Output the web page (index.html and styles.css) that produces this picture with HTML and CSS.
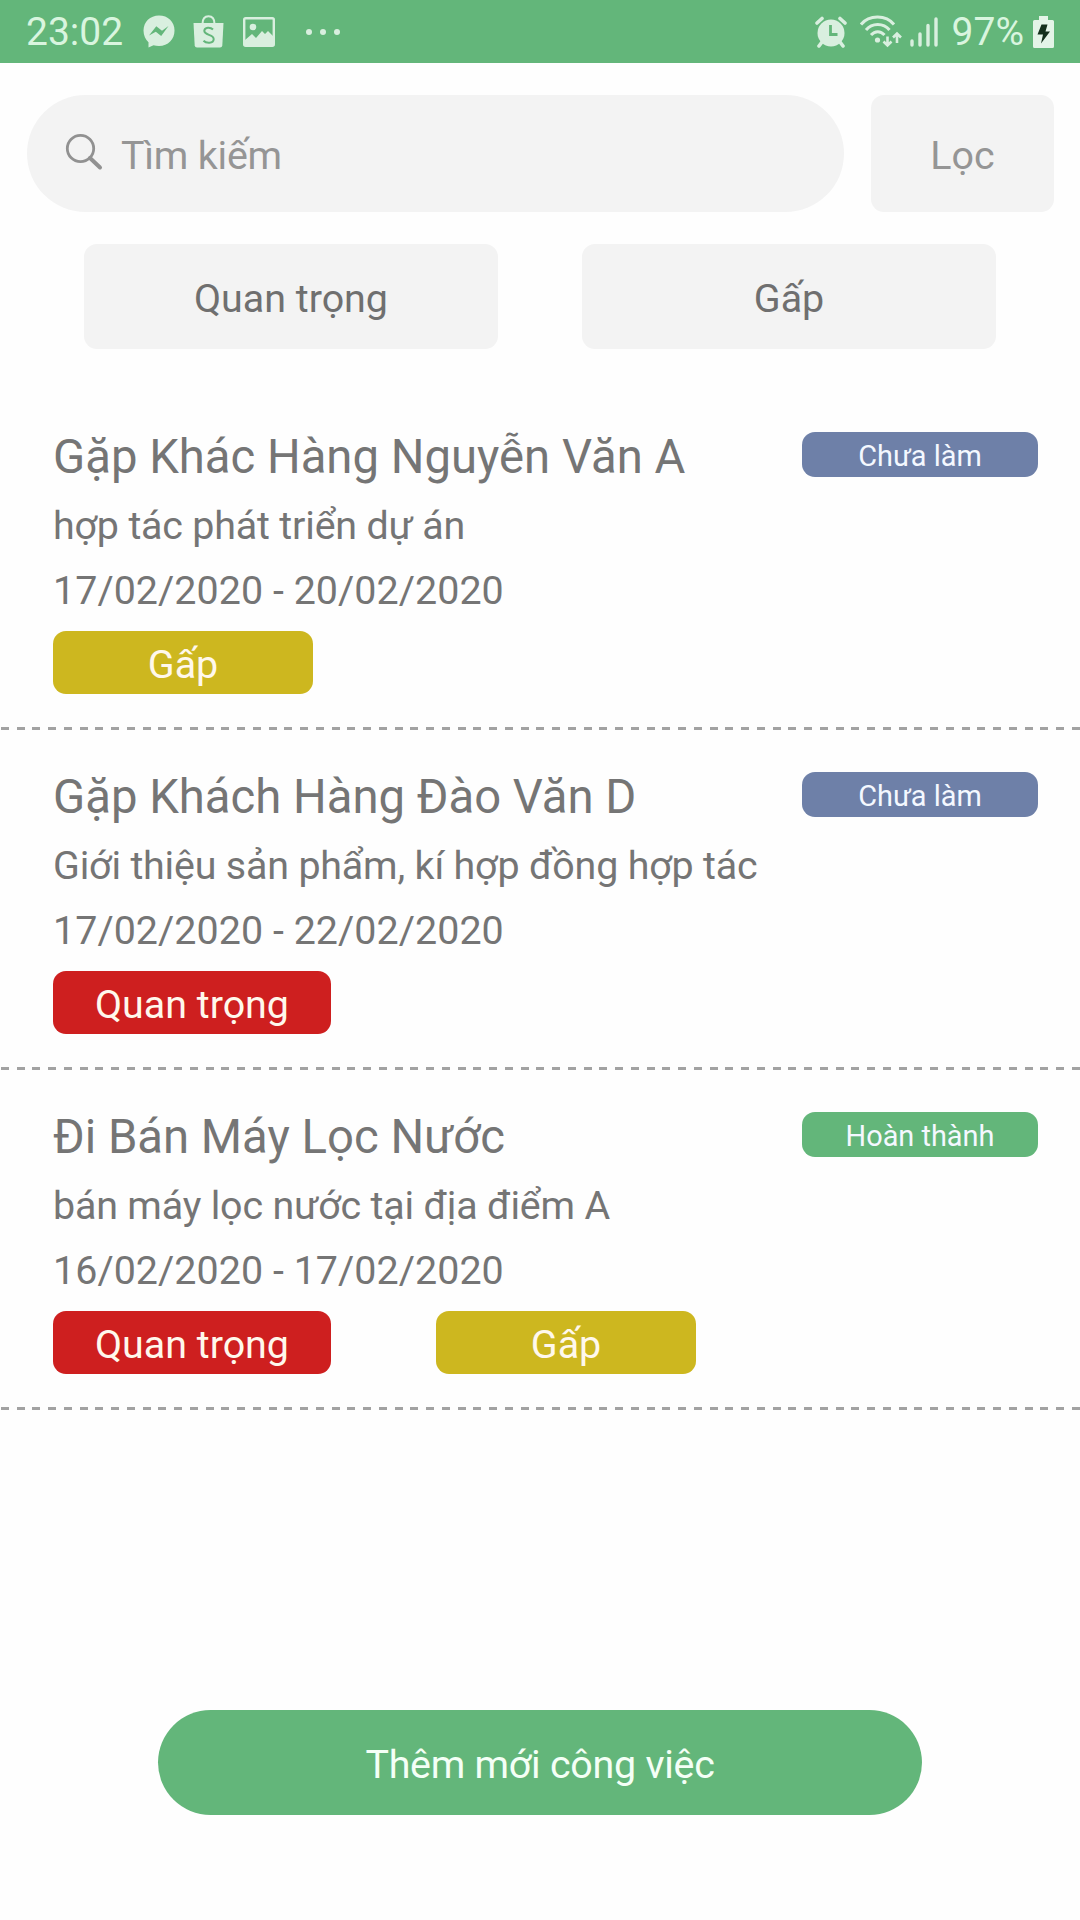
FILE: index.html
```html
<!DOCTYPE html>
<html lang="vi">
<head>
    <meta charset="UTF-8">
    <meta name="viewport" content="width=device-width, initial-scale=1.0">
    <title>Công việc</title>
    <link rel="stylesheet" href="styles.css">
</head>
<body>
    <!-- Status bar -->
    <div class="status-bar">
        <div class="status-left">
            <span class="clock">23:02</span>
            <svg class="icon-messenger" width="32" height="33" viewBox="0 0 32 33">
                <path fill="#d9efdf" d="M16 0.5C7 .5.5 7 .5 15.500c0 5 2 9 5 11.700V32.500l5-2.200c1.700.5 3.500.7 5.500.7 9 0 15.500-6.700 15.500-15.500S25 .5 16 .5z"/>
                <path fill="#63b67a" d="M6 20.500l7.300-9.300 5.700 4.500 6.500-4.700-7.300 10-5.400-4.300z"/>
            </svg>
            <svg class="icon-bag" width="31" height="33" viewBox="0 0 31 33">
                <path d="M9.500 9C9.500 4 12 1.200 15.500 1.200S21.500 4 21.500 9" fill="none" stroke="#d9efdf" stroke-width="2"/>
                <path fill="#d9efdf" d="M.5 8h30l-1.200 22.500q-.2 2-2.300 2H4q-2.100 0-2.300-2z"/>
                <path d="M20 14.500c-2.500-2.600-8.500-2.600-8.700 1.300-.1 4.800 9.700 3.300 9.400 8.400-.3 4.600-7.500 4.400-10.200 1.500" fill="none" stroke="#63b67a" stroke-width="2"/>
            </svg>
            <svg class="icon-image" width="32" height="30" viewBox="0 0 32 30">
                <rect x="1.200" y="1.200" width="29.600" height="27.600" rx="1.500" fill="none" stroke="#d9efdf" stroke-width="2.400"/>
                <circle cx="10" cy="10" r="3.300" fill="#d9efdf"/>
                <path fill="#d9efdf" d="M2 23l7-6 4 4 6-7 3 3 3-3 5 5v10H2z"/>
            </svg>
            <svg class="icon-dots" width="36" height="8" viewBox="0 0 36 8">
                <g fill="#d9efdf"><circle cx="4" cy="4" r="3"/><circle cx="18" cy="4" r="3"/><circle cx="32" cy="4" r="3"/></g>
            </svg>
        </div>
        <div class="status-right">
            <svg class="icon-alarm" width="32" height="32" viewBox="0 0 32 32">
                <circle cx="16" cy="17" r="13.500" fill="#d9efdf"/>
                <path d="M2 7L7 2.500M30 7L25 2.500M7 26l-3 4M25 26l3 4" stroke="#d9efdf" stroke-width="3.600" stroke-linecap="round"/>
                <path d="M15.500 9v9.500H22.500" fill="none" stroke="#63b67a" stroke-width="2.800"/>
            </svg>
            <svg class="icon-wifi" width="42" height="34" viewBox="0 0 42 34">
                <g fill="none" stroke="#d9efdf" stroke-width="3">
                    <path d="M1 9.500C9-.500 26-.500 34 9.500"/>
                    <path d="M6 15c6-7.500 17.500-7.500 23.500 0"/>
                    <path d="M11 20c4-4.500 9.500-4.500 13.500 0"/>
                    <path stroke-width="2.600" d="M27.500 21.500v9M23.500 26.500l4 4 4-4M37 28V19M33 22.500l4-4 4 4"/>
                </g>
                <circle cx="17.500" cy="25" r="2.600" fill="#d9efdf"/>
            </svg>
            <svg class="icon-signal" width="28" height="30" viewBox="0 0 28 30">
                <path d="M2 28v-4M10 28V17M18 28V8.500M26 28V2" stroke="#d9efdf" stroke-width="3.400" stroke-linecap="round"/>
            </svg>
            <span class="battery-text">97%</span>
            <svg class="icon-battery" width="21" height="32" viewBox="0 0 21 32">
                <path fill="#e4f4e8" d="M6 0h9v4h4.500q1.500 0 1.500 1.500v25q0 1.500-1.500 1.500h-18Q0 32 0 30.500v-25Q0 4 1.500 4H6z"/>
                <path fill="#14301c" d="M8.500 8.500h6l-2 7h4.500L8 27.500l2-9H4.500z"/>
            </svg>
        </div>
    </div>

    <!-- Search -->
    <div class="search-row">
        <div class="search-box">
            <svg width="38" height="38" viewBox="0 0 38 38">
                <circle cx="15.500" cy="15.500" r="13.200" fill="none" stroke="#919191" stroke-width="2.800"/>
                <path d="M25 25l10 9.500" stroke="#919191" stroke-width="4" stroke-linecap="round"/>
            </svg>
            <span>Tìm kiếm</span>
        </div>
        <div class="btn-filter">Lọc</div>
    </div>
    <div class="filter-row">
        <div class="filter">Quan trọng</div>
        <div class="filter">Gấp</div>
    </div>

    <!-- Task list -->
    <div class="task-list">
        <div class="task">
            <div class="task-head">
                <div class="task-title">Gặp Khác Hàng Nguyễn Văn A</div>
                <div class="status status-todo">Chưa làm</div>
            </div>
            <div class="task-desc">hợp tác phát triển dự án</div>
            <div class="task-date">17/02/2020 - 20/02/2020</div>
            <div class="tags">
                <div class="tag tag-urgent">Gấp</div>
            </div>
        </div>
        <div class="task">
            <div class="task-head">
                <div class="task-title">Gặp Khách Hàng Đào Văn D</div>
                <div class="status status-todo">Chưa làm</div>
            </div>
            <div class="task-desc">Giới thiệu sản phẩm, kí hợp đồng hợp tác</div>
            <div class="task-date">17/02/2020 - 22/02/2020</div>
            <div class="tags">
                <div class="tag tag-important">Quan trọng</div>
            </div>
        </div>
        <div class="task">
            <div class="task-head">
                <div class="task-title">Đi Bán Máy Lọc Nước</div>
                <div class="status status-done">Hoàn thành</div>
            </div>
            <div class="task-desc">bán máy lọc nước tại địa điểm A</div>
            <div class="task-date">16/02/2020 - 17/02/2020</div>
            <div class="tags">
                <div class="tag tag-important">Quan trọng</div>
                <div class="tag tag-urgent">Gấp</div>
            </div>
        </div>
    </div>

    <div class="btn-add">Thêm mới công việc</div>
</body>
</html>
```
FILE: styles.css
```css
* {
    box-sizing: border-box;
}
body {
    display: flex;
    flex-direction: column;
    height: 1920px;
    margin: 0;
    background: #fefefe;
    font-family: Roboto, "Noto Sans", sans-serif;
    font-size: 39.4px;
    color: #757575;
    white-space: nowrap;
}
svg {
    flex: none;
}

/* Status bar */
.status-bar {
    display: flex;
    justify-content: space-between;
    height: 63px;
    padding: 0 26px;
    background: #63b67a;
    color: #d9f5df;
}
.status-left, .status-right {
    display: flex;
    align-items: center;
}
.clock, .battery-text {
    padding-top: 2px;
    font-size: 39px;
    line-height: 67px;
}
.icon-messenger {
    margin-left: 20px;
}
.icon-bag {
    margin-left: 18px;
}
.icon-image {
    margin-left: 19px;
}
.icon-dots {
    margin-left: 30px;
}
.icon-wifi {
    margin-left: 13px;
}
.icon-signal {
    margin-left: 8px;
}
.battery-text {
    margin-left: 14px;
}
.icon-battery {
    margin-left: 9px;
}

/* Search and filters */
.search-row {
    display: flex;
    gap: 27px;
    height: 117px;
    margin: 32px 26px 0 27px;
    color: #959595;
}
.search-box {
    display: flex;
    align-items: center;
    width: 817px;
    padding: 0 38px;
    border-radius: 59px;
    background: #f3f3f3;
}
.search-box svg {
    margin-top: -3px;
}
.search-box span {
    margin-left: 18px;
    padding-top: 3px;
    letter-spacing: -0.2px;
}
.btn-filter {
    flex: 1;
    padding-top: 4px;
    border-radius: 13px;
    background: #f3f3f3;
    line-height: 114px;
    text-align: center;
}
.filter-row {
    display: flex;
    justify-content: space-between;
    margin: 32px 84px 0;
}
.filter {
    width: 414px;
    height: 105px;
    padding-top: 2px;
    border-radius: 13px;
    background: #f3f3f3;
    color: #6f6f6f;
    line-height: 105px;
    text-align: center;
}

/* Task list */
.task-list {
    margin-top: 41px;
}
.task {
    height: 340px;
    padding: 33px 42px 0 53px;
    background: repeating-linear-gradient(90deg, #a2a2a2 0 8px, transparent 8px 15.75px) 1px 100% / 100% 3px no-repeat;
}
.task-head {
    display: flex;
    justify-content: space-between;
}
.task-title {
    font-size: 47.25px;
    line-height: 68px;
}
.task-desc {
    letter-spacing: -0.18px;
    line-height: 69px;
}
.task-date {
    letter-spacing: 0.05px;
    line-height: 61px;
}
.status {
    width: 236px;
    height: 45px;
    margin-top: 9px;
    border-radius: 13px;
    color: #f4f8ff;
    font-size: 28.9px;
    line-height: 48px;
    text-align: center;
}
.status-todo {
    background: #6e80a8;
}
.status-done {
    background: #63b67a;
}
.tags {
    display: flex;
    gap: 105px;
    margin-top: 10px;
}
.tag {
    height: 63px;
    border-radius: 13px;
    color: #fff8ec;
    line-height: 67px;
    text-align: center;
}
.tag-urgent {
    width: 260px;
    background: #cdb71f;
}
.tag-important {
    width: 278px;
    background: #ce1f1f;
}

.btn-add {
    width: 764px;
    height: 105px;
    margin: auto auto 105px;
    border-radius: 53px;
    background: #63b67a;
    color: #f4fff6;
    letter-spacing: -0.25px;
    line-height: 109px;
    text-align: center;
}
```
